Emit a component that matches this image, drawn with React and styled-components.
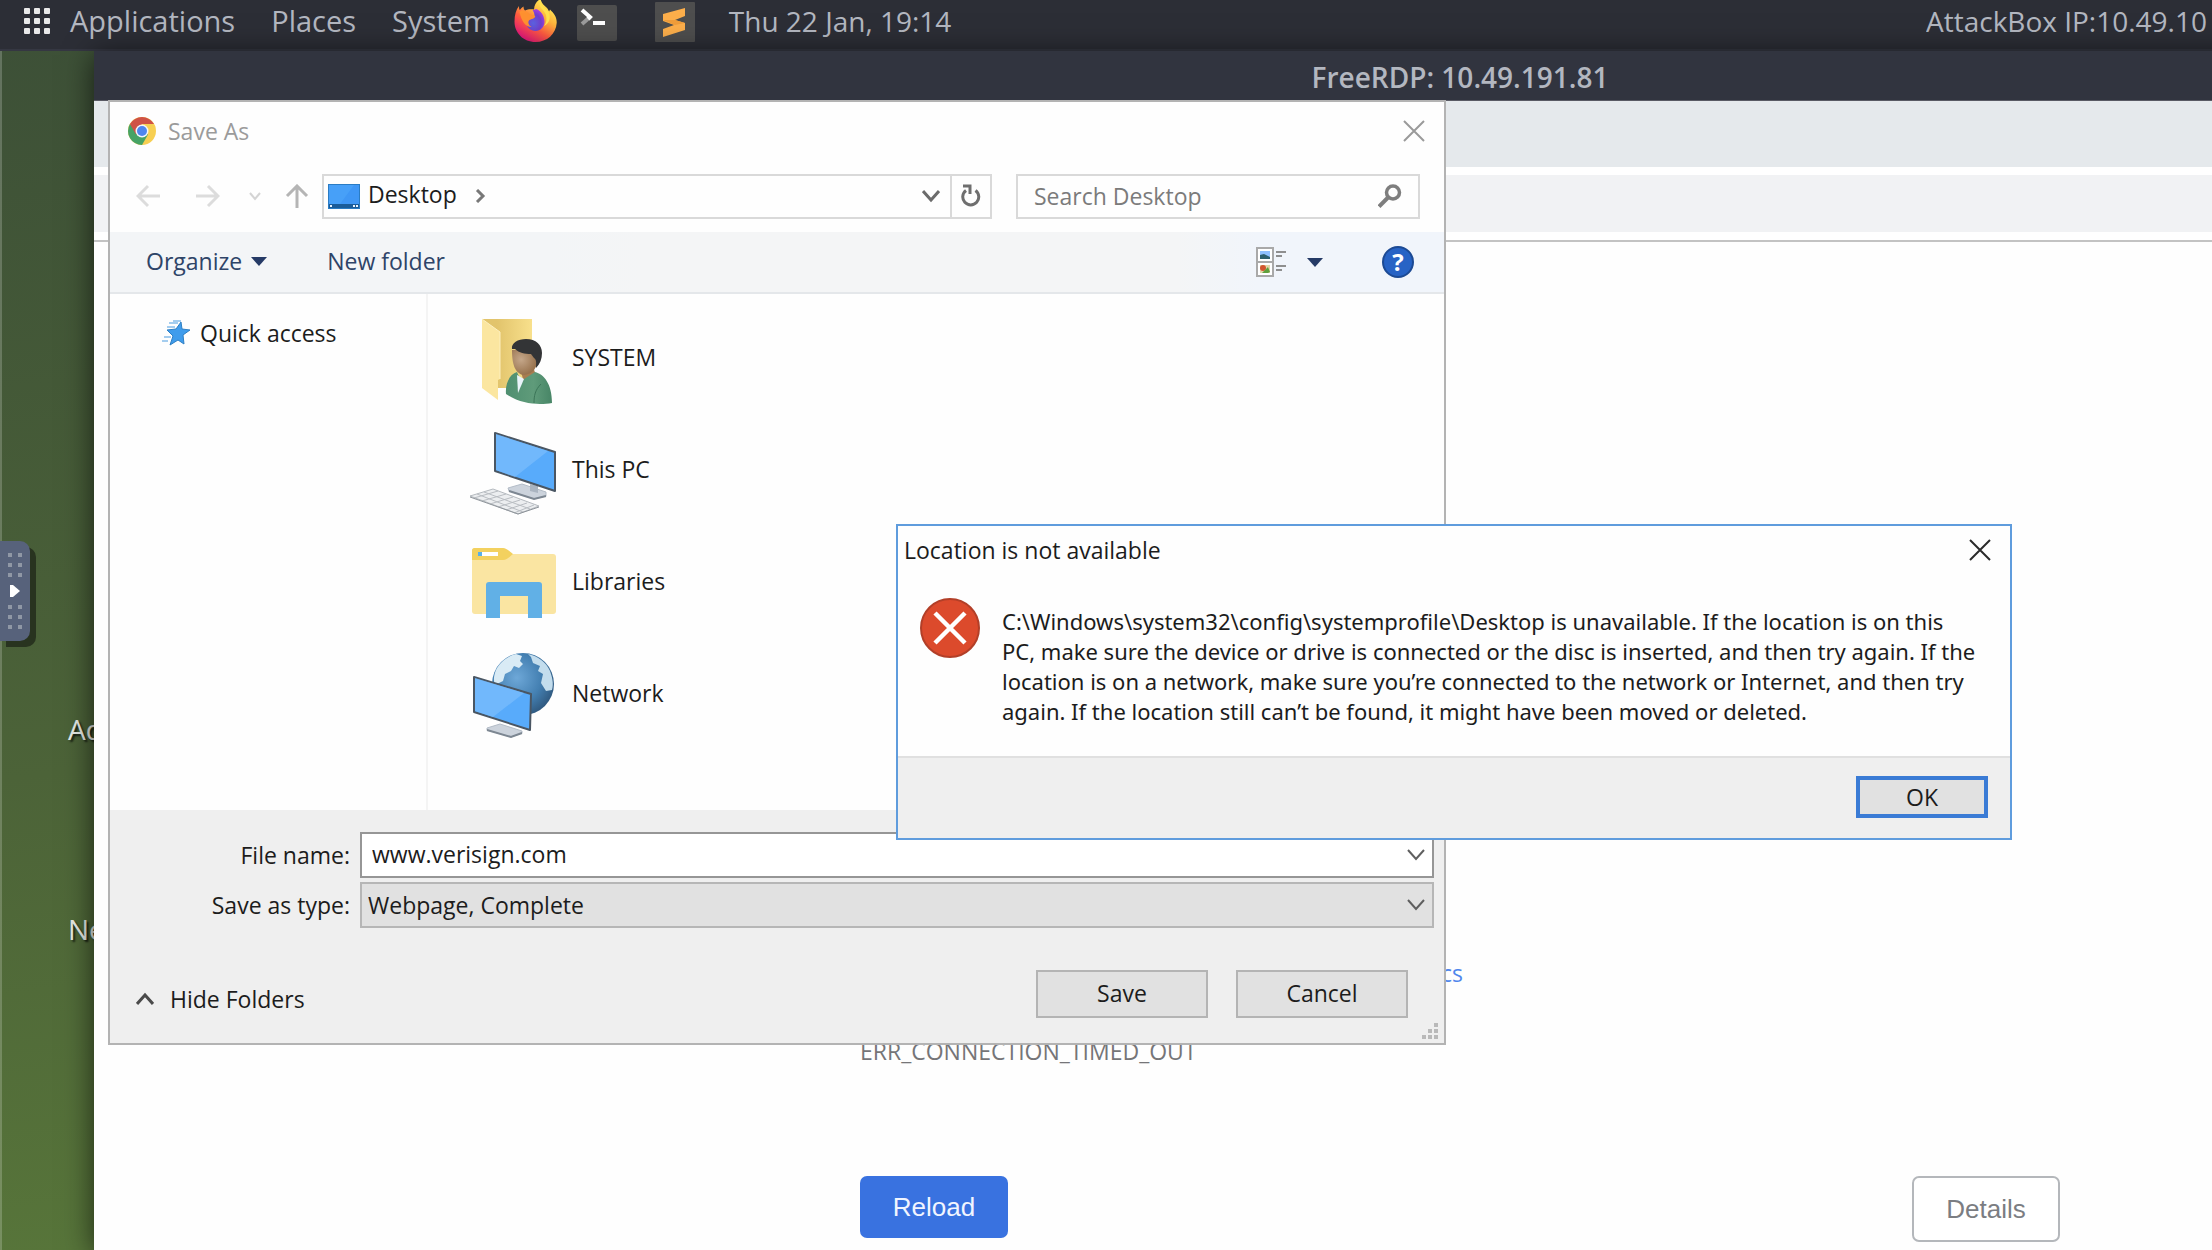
import React from 'react';
import styled, { createGlobalStyle } from 'styled-components';

const uiFont = "'Open Sans', 'Noto Sans', sans-serif";

const GlobalStyle = createGlobalStyle`
  * {
    box-sizing: border-box;
  }

  body {
    margin: 0;
    font-family: ${uiFont};
    font-size: 23px;
    line-height: 30px;
    color: #1c1c1c;
  }

  button,
  input,
  select {
    margin: 0;
    padding: 0;
    border: 0;
    background: none;
    color: inherit;
    font: inherit;
  }

  svg {
    display: block;
    flex: none;
  }
`;

/* Desktop */

const Desktop = styled.div`
  position: relative;
  min-height: 100vh;
  overflow: hidden;
  background: linear-gradient(172deg, #3c4f37 0%, #4c6338 50%, #5e803b 100%);
  box-shadow: inset 2px 0 0 rgba(255, 255, 255, 0.2);
`;

const TopPanel = styled.header`
  display: flex;
  align-items: center;
  height: 51px;
  padding: 0 0 8px 24px;
  background: #2c2e36;
  border-bottom: 2px solid #353742;
  color: #b3b7c0;
  font-size: 28px;
`;

const PanelMenu = styled.nav`
  display: flex;
  gap: 36px;
  margin-left: 20px;
  font-size: 29px;
`;

const Launchers = styled.div`
  display: flex;
  align-items: flex-start;
  margin-left: 24px;
`;

const Launcher = styled.button`
  height: 43px;
  margin-right: ${props => props.$gap || 0}px;
  padding-top: ${props => props.$top || 0}px;
`;

const Clock = styled.time`
  margin-left: 34px;
`;

const HostAddress = styled.span`
  width: 286px;
  margin-left: auto;
  overflow: hidden;
  white-space: nowrap;
`;

const DesktopLabel = styled.span`
  position: absolute;
  top: ${props => props.$top}px;
  left: 68px;
  color: #e8ebe6;
  font-size: 28px;
  text-shadow: 2px 2px 2px rgba(0, 0, 0, 0.7);
`;

const DockHandle = styled.button`
  position: absolute;
  top: 541px;
  left: 0;
  width: 30px;
  height: 100px;
  border-radius: 0 10px 10px 0;
  background: #57627b;
  box-shadow: 6px 6px 0 #28331f;
`;

/* Remote session, runs past the right edge of the desktop */

const RemoteWindow = styled.section`
  position: absolute;
  inset: 51px -614px 0 94px;
  display: flex;
  flex-direction: column;
  background: #fefefe;
  box-shadow: 0 4px 28px rgba(0, 0, 0, 0.65);
`;

const RemoteTitle = styled.h1`
  margin: 0;
  padding: 11px 0 8px;
  background: #31343f;
  border-bottom: 1px solid #595a64;
  color: #b3b7c0;
  font-size: 28px;
  font-weight: 600;
  text-align: center;
`;

const TabStrip = styled.div`
  height: 66px;
  background: #e5e9ec;
`;

const AddressRow = styled.div`
  padding: 8px 0;
  background: #ffffff;
  border-bottom: 2px solid #c3c3c3;
`;

const AddressField = styled.div`
  height: 57px;
  background: #f1f2f4;
`;

const ErrorPage = styled.main`
  width: 100%;
  max-width: 1200px;
  margin: 0 auto;
  padding-top: 716px;
  color: #757578;
`;

const DiagnosticsLink = styled.a`
  display: block;
  width: 603px;
  color: #4f86ec;
  text-align: right;
  text-decoration: none;
`;

const ErrorCode = styled.p`
  margin: 48px 0 110px;
`;

const ErrorActions = styled.div`
  display: flex;
  justify-content: space-between;
`;

const PageButton = styled.button`
  width: 148px;
  height: ${props => (props.$primary ? 62 : 66)}px;
  border: ${props => (props.$primary ? '0' : '2px solid #b4b7bb')};
  border-radius: 7px;
  background: ${props => (props.$primary ? '#3972e0' : '#ffffff')};
  color: ${props => (props.$primary ? '#f1f5ff' : '#7b7d82')};
  font-family: 'Liberation Sans', Arial, sans-serif;
  font-size: 26px;
`;

/* Save As */

const SaveDialog = styled.form`
  position: absolute;
  top: 100px;
  left: 108px;
  width: 1338px;
  background: #fefefe;
  border: 2px solid #b3b3b3;
`;

const DialogTitle = styled.div`
  display: flex;
  align-items: center;
  gap: 12px;
  height: 58px;
  padding: 0 19px 0 18px;
  color: #9b9b9b;
`;

const CloseButton = styled.button`
  margin-left: auto;
`;

const NavRow = styled.div`
  display: flex;
  align-items: center;
  height: 72px;
  padding: 0 24px 0 26px;
`;

const NavButtons = styled.div`
  display: grid;
  grid-template-columns: 60px 53px 36px 37px;
  align-items: center;
  justify-items: start;
`;

const PathBox = styled.div`
  display: flex;
  flex: 1;
  align-items: center;
  height: 45px;
  padding-left: 4px;
  border: 2px solid #d9d9d9;
`;

const PathName = styled.span`
  padding: 0 18px 4px 8px;
`;

const PathToggle = styled.button`
  margin: 0 10px 0 auto;
`;

const RefreshButton = styled.button`
  display: grid;
  place-items: center;
  align-self: stretch;
  width: 40px;
  border-left: 2px solid #d9d9d9;
`;

const SearchBox = styled.label`
  display: flex;
  align-items: center;
  width: 404px;
  height: 45px;
  margin-left: 24px;
  padding: 0 16px;
  border: 2px solid #d9d9d9;
`;

const SearchInput = styled.input`
  flex: 1;
  min-width: 0;
  outline: 0;

  &::placeholder {
    color: #7b7b7b;
    opacity: 1;
  }
`;

const CommandBar = styled.div`
  display: flex;
  align-items: center;
  height: 62px;
  padding: 0 30px 0 36px;
  background: linear-gradient(90deg, #f3f5f7 33%, #f4f5f6 40%, #f4f5f6 80%, #f1f5fb 86%);
  border-bottom: 2px solid #e4e7ea;
  color: #2e4468;
`;

const CommandButton = styled.button`
  display: flex;
  align-items: center;
  gap: 9px;
  margin-right: ${props => props.$after || 0}px;
  padding-bottom: 2px;
`;

const ViewTools = styled.div`
  display: flex;
  align-items: center;
  gap: 59px;
  margin-left: auto;
`;

const ViewButton = styled.button`
  display: flex;
  align-items: center;
  gap: 20px;
`;

const Browser = styled.div`
  display: grid;
  grid-template-columns: 318px 1fr;
  height: 516px;
`;

const Sidebar = styled.div`
  padding: 24px 0 0 52px;
  border-right: 2px solid #f4f4f4;
`;

const SidebarItem = styled.div`
  display: flex;
  align-items: center;
  gap: 10px;
`;

const Places = styled.ul`
  display: flex;
  flex-direction: column;
  gap: 22px;
  margin: 0;
  padding: 22px 0 0 40px;
  list-style: none;
`;

const Place = styled.li`
  display: flex;
  align-items: center;
  gap: 14px;

  span {
    padding-bottom: 8px;
  }
`;

const SavePanel = styled.div`
  position: relative;
  padding: 22px 10px 25px;
  background: #efefef;
`;

const Fields = styled.div`
  display: grid;
  grid-template-columns: 230px 1fr;
  column-gap: 10px;
  row-gap: 4px;
  align-items: center;
`;

const FieldLabel = styled.label`
  text-align: right;
`;

const FieldBox = styled.div`
  display: flex;
  align-items: center;
  height: 46px;
  padding-right: 7px;
  background: ${props => (props.$filled ? '#e1e1e1' : '#ffffff')};
  border: 2px solid ${props => (props.$filled ? '#b6b6b6' : '#969696')};

  input,
  select {
    flex: 1;
    min-width: 0;
    height: 38px;
    padding-left: ${props => (props.$filled ? 6 : 10)}px;
    padding-bottom: ${props => (props.$filled ? 0 : 2)}px;
    outline: 0;
    appearance: none;
  }
`;

const ActionRow = styled.div`
  display: flex;
  align-items: center;
  margin-top: 42px;
  padding: 0 26px 0 16px;
`;

const HideFolders = styled.button`
  display: flex;
  align-items: center;
  gap: 16px;
  margin-right: auto;
  padding-top: 10px;
`;

const DialogButton = styled.button`
  width: 172px;
  height: 48px;
  margin-left: 28px;
  padding-bottom: 2px;
  background: #e1e1e1;
  border: 2px solid #b4b4b4;
`;

const ResizeGrip = styled.svg`
  position: absolute;
  right: 6px;
  bottom: 4px;
`;

/* Location alert */

const Alert = styled.div`
  position: absolute;
  top: 524px;
  left: 896px;
  width: 1116px;
  background: #fefefe;
  border: 2px solid #5f9cdd;
`;

const AlertTitle = styled.div`
  display: flex;
  align-items: center;
  height: 48px;
  padding: 0 19px 0 6px;
`;

const AlertBody = styled.div`
  display: flex;
  gap: 22px;
  padding: 24px 16px 30px 22px;
  font-family: 'Noto Sans', 'Open Sans', sans-serif;
  font-size: 22px;

  p {
    margin: 8px 0 0;
    white-space: nowrap;
  }
`;

const AlertFooter = styled.div`
  display: flex;
  justify-content: flex-end;
  padding: 18px 22px 20px;
  background: #efefef;
  border-top: 2px solid #e0e0e0;
`;

const OkButton = styled.button`
  width: 132px;
  height: 42px;
  background: #e1e1e1;
  border: 4px solid #3a7bd5;
`;

/* Icons */

const AppsGrid = () => (
  <svg width="26" height="26" fill="#e9e9ea">
    {[0, 10, 20].map(y =>
      [0, 10, 20].map(x => <rect key={`${x}-${y}`} x={x} y={y} width="6" height="6" rx="1" />)
    )}
  </svg>
);

const FirefoxIcon = () => (
  <svg width="43" height="43" viewBox="0 0 43 43">
    <defs>
      <linearGradient id="fxBody" x1="0.85" y1="0.1" x2="0.25" y2="0.95">
        <stop offset="0" stopColor="#fff25a" />
        <stop offset="0.35" stopColor="#ffb13b" />
        <stop offset="0.65" stopColor="#ff5a40" />
        <stop offset="1" stopColor="#e2177b" />
      </linearGradient>
      <radialGradient id="fxGlobe" cx="0.4" cy="0.65" r="0.7">
        <stop offset="0" stopColor="#5b62e0" />
        <stop offset="0.6" stopColor="#7040cc" />
        <stop offset="1" stopColor="#b23fe0" />
      </radialGradient>
    </defs>
    <path
      d="M5 7c0 2 .2 3 .8 4C7 9.400 8 8.500 9.500 7.500c0 2 .5 3 1.500 4 3-1.500 6-1.500 9-1 .3-5 2.500-8.500 6.500-10.500 1 4 3 6 6 8.500 1 1 2 2.500 2.600 4l.9-2C40 14.500 43 18 42.700 24 42 35 33 43 21.500 43 9.500 43 .5 34 .5 22.500.5 16 2 10.500 5 7z"
      fill="url(#fxBody)"
    />
    <path d="M22 10c4 1 8.500 6 8.500 12.500C30.500 28 26.500 32 21.500 32S12 28 12 22.500c0-2 .5-3.500 1.500-5l7-.5c0-3-1-4.500-2-5.500z" fill="url(#fxGlobe)" />
    <path d="M5.500 13c2-2 4-1.800 6-1 2.500 1 3 3.500 8.500 4.500 1 .2 1.500.5 1 1.500-1 2-5 2.200-6 3.500-1.500 2 0 5 2.500 6.500-6 0-10-6-12-15z" fill="#ff9130" />
    <path d="M26 2c-2 7 4 8 6 14 1 4 .5 8-2 11 5-2 7-8 5-13-2-4-7-6-9-12z" fill="#ffe24d" />
  </svg>
);

const TerminalIcon = () => (
  <svg width="40" height="36" viewBox="0 0 40 36">
    <rect width="40" height="36" rx="2" fill="#4e4e4e" />
    <path d="M5 19l8-7" fill="none" stroke="#9b9b9b" strokeWidth="4" />
    <path d="M5 5l8 7-2 2" fill="none" stroke="#ffffff" strokeWidth="4" />
    <rect x="16" y="16" width="12" height="4" fill="#ffffff" />
  </svg>
);

const SublimeIcon = () => (
  <svg width="40" height="40" viewBox="0 0 40 40">
    <rect width="40" height="40" rx="1" fill="#4e4e4e" />
    <path d="M30 6v8l-10 4 10 3v7L8 35v-8l11-4-11-4v-7z" fill="#fdaf4b" />
    <path d="M8 18l12 5 10-2-10-3z" fill="#f09d3a" />
  </svg>
);

const ChromeIcon = () => (
  <svg width="28" height="28" viewBox="0 0 28 28">
    <circle cx="14" cy="14" r="14" fill="#f7cf52" />
    <path d="M1.900 7A14 14 0 0 1 26.100 7H14z" fill="#cf5246" />
    <path d="M1.900 7A14 14 0 0 0 14 28l6-10.500-6-3.500z" fill="#46a365" />
    <path d="M1.900 7L14 7l-6 10.500z" fill="#cf5246" />
    <circle cx="14" cy="14" r="6.500" fill="#f3f6fb" />
    <circle cx="14" cy="14" r="5" fill="#4e86ee" />
  </svg>
);

const Cross = ({ size = 22, color }) => (
  <svg width={size} height={size} viewBox="0 0 22 22" stroke={color} strokeWidth="2">
    <path d="M1 1l20 20M21 1L1 21" />
  </svg>
);

const Arrow = ({ d, color = '#dcdcdc', width = 24 }) => (
  <svg width={width} height="24" viewBox={`0 0 ${width} 24`} fill="none" stroke={color} strokeWidth="3">
    <path d={d} />
  </svg>
);

const Chevron = ({ d = 'M1 2l8 9 8-9', color = '#6b6b6b', width = 18, height = 14, stroke = 3 }) => (
  <svg width={width} height={height} viewBox={`0 0 ${width} ${height}`} fill="none" stroke={color} strokeWidth={stroke}>
    <path d={d} />
  </svg>
);

const Triangle = () => (
  <svg width="16" height="9" fill="#253a66">
    <path d="M0 0h16l-8 9z" />
  </svg>
);

const DesktopIcon = () => (
  <svg width="32" height="25" viewBox="0 0 32 25">
    <rect width="32" height="25" fill="#2a7cc4" />
    <rect x="1" y="1" width="30" height="19" fill="#47a0f8" />
    <path d="M12 20L26 1h5v19z" fill="#3f97f5" />
    <rect x="1" y="20" width="30" height="4" fill="#1a5c99" />
    <path d="M2 22h2M25 22h2M28 22h2" stroke="#e9f4ff" strokeWidth="2" />
  </svg>
);

const RefreshIcon = () => (
  <svg width="20" height="24" viewBox="0 0 20 24" fill="none" stroke="#6e6e6e" strokeWidth="3">
    <path d="M14.500 6.500A8 8 0 1 1 5 6.500" />
    <path d="M2 2h7v8" />
  </svg>
);

const SearchIcon = () => (
  <svg width="24" height="24" viewBox="0 0 24 24" fill="none" stroke="#7e7e7e">
    <circle cx="15" cy="8.500" r="6.500" strokeWidth="3.500" />
    <path d="M10.500 13L1 22.500" strokeWidth="4" />
  </svg>
);

const ViewIcon = () => (
  <svg width="31" height="31" viewBox="0 0 31 31">
    <path d="M1 1h16v28H1zM1 15h16" fill="#ffffff" stroke="#a9a9a9" strokeWidth="2" />
    <rect x="4" y="4" width="10" height="8" fill="#8fc0ff" />
    <path d="M4 8l4-1 6 3v2H4z" fill="#2d5f6e" />
    <rect x="4" y="18" width="10" height="8" fill="#e4d6a8" />
    <circle cx="7" cy="21" r="3" fill="#d2552f" />
    <path d="M6 26l6-6 2 5-2 1z" fill="#5fa03d" />
    <path d="M20 5h10M20 9h6M20 19h10M20 23h6" stroke="#8f8f8f" strokeWidth="2" />
  </svg>
);

const HelpBadge = styled.button`
  width: 32px;
  height: 32px;
  background: #2763c5;
  border: 2px solid #1c4a94;
  border-radius: 50%;
  color: #ffffff;
  font-size: 24px;
  font-weight: 700;
  line-height: 28px;
`;

const StarIcon = () => (
  <svg width="28" height="26" viewBox="0 0 28 26">
    <path d="M7 3h9M5 7h8M2 17h7M0 21h6M11 1h8" stroke="#86bdea" strokeWidth="1.500" />
    <path d="M19 2l1 7 8 1-7 5 1 9-6-4-8 5 3-9-6-6 9-1z" fill="#3f9cec" stroke="#2d7fc4" />
  </svg>
);

const Screen = ({ points, shine }) => (
  <g strokeLinejoin="round">
    <polygon points={points} fill="#58abfb" stroke="#4a5663" strokeWidth="2" />
    <polygon points={shine} fill="#7cbdfc" opacity="0.7" />
  </g>
);

const UserFolderIcon = () => (
  <svg width="90" height="90" viewBox="0 0 90 90">
    <defs>
      <linearGradient id="folderBack">
        <stop offset="0.300" stopColor="#e2c46c" />
        <stop offset="1" stopColor="#f8e08c" />
      </linearGradient>
      <radialGradient id="face" cx="0.35" cy="0.4" r="0.7">
        <stop offset="0" stopColor="#c5a78a" />
        <stop offset="1" stopColor="#916a44" />
      </radialGradient>
      <linearGradient id="coat">
        <stop offset="0" stopColor="#4f8f70" />
        <stop offset="0.6" stopColor="#5f9b7a" />
        <stop offset="1" stopColor="#478566" />
      </linearGradient>
    </defs>
    <path d="M14 3h50v69H30z" fill="url(#folderBack)" />
    <path d="M14 3l18 13v47l-2 1v20L14 72z" fill="#fbe6a0" />
    <path d="M14 3l18 13v47" fill="none" stroke="#fdf0c0" />
    <path d="M52 52l13-1 3 8-10 15z" fill="#a87c50" />
    <path d="M38 78c-1-11 4-20 11-22l4 9 14-9c9 2 17 12 17 31-12 2-30 2-46-9z" fill="url(#coat)" />
    <path d="M49 59l7 4-6 14z" fill="#eaf3fa" />
    <path d="M66 87c0-7 1-13 7-19" fill="none" stroke="#3b7558" />
    <path d="M44 34c0 12 2 24 12 25 9-1 14-8 14-18l-6-8z" fill="url(#face)" />
    <path d="M44 33c-1-6 6-10 14-10 10 0 16 6 16 14 0 6-2 11-6 15 0-5 1-8-2-10l-3-4c-6 0-12-1-16-5z" fill="#333436" />
  </svg>
);

const ComputerIcon = () => (
  <svg width="90" height="90" viewBox="0 0 90 90">
    <path d="M40 60l14-4 24 8v4l-12 3-25-8z" fill="#ccd3dc" stroke="#b3bcc7" />
    <path d="M41 63l25 8 12-3" fill="none" stroke="#7d8792" strokeWidth="2" />
    <path d="M62 56l8 2v7l-8-2z" fill="#aab4c0" />
    <Screen points="27,5 87,24 87,63 27,43" shine="28,6 80,23 47,49 28,42" />
    <path d="M2 68l23-7 46 17-21 8z" fill="#eceef0" stroke="#b5babf" />
    <path
      d="M9 66l46 18M16 64l46 17M6 70l24-7M14 73l24-7M22 76l23-7M30 79l22-7M38 82l21-7M46 85l20-8"
      stroke="#b9bdc2"
      strokeWidth="1"
    />
    <path d="M2 69l48 17 21-7" fill="none" stroke="#8f959b" />
  </svg>
);

const LibrariesIcon = () => (
  <svg width="90" height="90" viewBox="0 0 90 90">
    <rect x="4" y="14" width="84" height="60" rx="3" fill="#fae5a2" />
    <path d="M6 8h29c3 0 5 2 10 6-5 4-6 6-10 6H4V10c0-1 1-2 2-2z" fill="#f3d15f" />
    <rect x="10" y="12" width="20" height="4" fill="#ffffff" />
    <rect x="10" y="12" width="4" height="4" fill="#58b0e8" />
    <path d="M18 78V45q0-3 3-3h50q3 0 3 3v33H60V56H32v22z" fill="#61b0e6" />
  </svg>
);

const NetworkIcon = () => (
  <svg width="90" height="90" viewBox="0 0 90 90">
    <defs>
      <radialGradient id="globe" cx="0.4" cy="0.4" r="0.65">
        <stop offset="0" stopColor="#6ea8d8" />
        <stop offset="0.6" stopColor="#4480b2" />
        <stop offset="1" stopColor="#2f587e" />
      </radialGradient>
    </defs>
    <circle cx="55" cy="32" r="31" fill="url(#globe)" />
    <path d="M28 18c4-8 12-14 20-16l6 2-2 5 3 3-4 4-5-2-3 5-6 3-2 7-8 4c-2-5-1-10 1-15z" fill="#d9ebf5" />
    <path d="M60 2c10 2 18 8 22 17 2 6 4 12 2 19l-6 1-5-8 2-9-5-3 2-5-7-3-2-6z" fill="#c3dded" />
    <path d="M19 76l13-4 22 7v2l-11 4-24-7z" fill="#ccd3dc" stroke="#b3bcc7" />
    <path d="M19 78l24 7 11-4" fill="none" stroke="#7d8792" strokeWidth="2" />
    <Screen points="6,25 63,42 62,78 6,60" shine="7,26 56,41 25,65 7,59" />
  </svg>
);

const ErrorIcon = () => (
  <svg width="60" height="60" viewBox="0 0 60 60">
    <circle cx="30" cy="30" r="29" fill="#dc4a2c" stroke="#b23f28" strokeWidth="2" />
    <path d="M15 15l30 30M45 15L15 45" stroke="#ffffff" strokeWidth="4.500" />
  </svg>
);

const HandleIcon = () => (
  <svg width="30" height="100" viewBox="0 0 30 100">
    {[12, 22, 32, 64, 74, 84].map(y => (
      <path key={y} d={`M8 ${y + 2}h4M18 ${y + 2}h4`} stroke="#8f97a5" strokeWidth="4" />
    ))}
    <path d="M10 44h3l7 6-7 6h-3z" fill="#ffffff" />
  </svg>
);

const places = [
  { name: 'SYSTEM', Icon: UserFolderIcon },
  { name: 'This PC', Icon: ComputerIcon },
  { name: 'Libraries', Icon: LibrariesIcon },
  { name: 'Network', Icon: NetworkIcon },
];

class RemoteSession extends React.Component {
  render() {
    return (
      <RemoteWindow>
        <RemoteTitle>FreeRDP: 10.49.191.81</RemoteTitle>
        <TabStrip />
        <AddressRow>
          <AddressField />
        </AddressRow>
        <ErrorPage>
          <DiagnosticsLink href="#diagnostics">Diagnostics</DiagnosticsLink>
          <ErrorCode>ERR_CONNECTION_TIMED_OUT</ErrorCode>
          <ErrorActions>
            <PageButton $primary>Reload</PageButton>
            <PageButton>Details</PageButton>
          </ErrorActions>
        </ErrorPage>
      </RemoteWindow>
    );
  }
}

class SaveAs extends React.Component {
  render() {
    return (
      <SaveDialog onSubmit={e => e.preventDefault()}>
        <DialogTitle>
          <ChromeIcon />
          <span>Save As</span>
          <CloseButton type="button" aria-label="Close">
            <Cross color="#9a9a9a" />
          </CloseButton>
        </DialogTitle>

        <NavRow>
          <NavButtons>
            <button type="button" aria-label="Back">
              <Arrow d="M24 12H2M12 2L2 12l10 10" />
            </button>
            <button type="button" aria-label="Forward">
              <Arrow d="M0 12h22M12 2l10 10-10 10" />
            </button>
            <button type="button" aria-label="Recent locations">
              <Chevron d="M1 1l5 6 5-6" color="#d4d4d4" width={12} height={9} stroke={2} />
            </button>
            <button type="button" aria-label="Up">
              <Arrow d="M12 24V2M2 12L12 2l10 10" color="#b5b5b5" />
            </button>
          </NavButtons>
          <PathBox>
            <DesktopIcon />
            <PathName>Desktop</PathName>
            <Chevron d="M2 1l6 6-6 6" width={11} color="#787878" />
            <PathToggle type="button" aria-label="Previous locations">
              <Chevron />
            </PathToggle>
            <RefreshButton type="button" aria-label="Refresh">
              <RefreshIcon />
            </RefreshButton>
          </PathBox>
          <SearchBox>
            <SearchInput type="text" placeholder="Search Desktop" aria-label="Search Desktop" />
            <SearchIcon />
          </SearchBox>
        </NavRow>

        <CommandBar>
          <CommandButton type="button" $after={60}>
            Organize
            <Triangle />
          </CommandButton>
          <CommandButton type="button">New folder</CommandButton>
          <ViewTools>
            <ViewButton type="button" aria-label="Change view">
              <ViewIcon />
              <Triangle />
            </ViewButton>
            <HelpBadge type="button">?</HelpBadge>
          </ViewTools>
        </CommandBar>

        <Browser>
          <Sidebar>
            <SidebarItem>
              <StarIcon />
              Quick access
            </SidebarItem>
          </Sidebar>
          <Places>
            {places.map(({ name, Icon }) => (
              <Place key={name}>
                <Icon />
                <span>{name}</span>
              </Place>
            ))}
          </Places>
        </Browser>

        <SavePanel>
          <Fields>
            <FieldLabel htmlFor="file-name">File name:</FieldLabel>
            <FieldBox>
              <input id="file-name" type="text" defaultValue="www.verisign.com" />
              <Chevron color="#5f5f5f" stroke={2} />
            </FieldBox>
            <FieldLabel htmlFor="file-type">Save as type:</FieldLabel>
            <FieldBox $filled>
              <select id="file-type">
                <option>Webpage, Complete</option>
              </select>
              <Chevron color="#5f5f5f" stroke={2} />
            </FieldBox>
          </Fields>
          <ActionRow>
            <HideFolders type="button">
              <Chevron d="M1 12l8-9 8 9" color="#4a4a4a" />
              Hide Folders
            </HideFolders>
            <DialogButton type="submit">Save</DialogButton>
            <DialogButton type="button">Cancel</DialogButton>
          </ActionRow>
          <ResizeGrip width="16" height="16" fill="#b9b9b9">
            <path d="M12 0h4v4h-4zM6 6h4v4H6zM12 6h4v4h-4zM0 12h4v4H0zM6 12h4v4H6zM12 12h4v4h-4z" />
          </ResizeGrip>
        </SavePanel>
      </SaveDialog>
    );
  }
}

class LocationAlert extends React.Component {
  render() {
    return (
      <Alert role="alertdialog" aria-labelledby="alert-title">
        <AlertTitle>
          <span id="alert-title">Location is not available</span>
          <CloseButton type="button" aria-label="Close">
            <Cross color="#2b2b2b" />
          </CloseButton>
        </AlertTitle>
        <AlertBody>
          <ErrorIcon />
          <p>
            C:\Windows\system32\config\systemprofile\Desktop is unavailable. If the location is on this
            <br />
            PC, make sure the device or drive is connected or the disc is inserted, and then try again. If the
            <br />
            location is on a network, make sure you’re connected to the network or Internet, and then try
            <br />
            again. If the location still can’t be found, it might have been moved or deleted.
          </p>
        </AlertBody>
        <AlertFooter>
          <OkButton type="button">OK</OkButton>
        </AlertFooter>
      </Alert>
    );
  }
}

const App = () => (
  <Desktop>
    <GlobalStyle />
    <TopPanel>
      <AppsGrid />
      <PanelMenu>
        <span>Applications</span>
        <span>Places</span>
        <span>System</span>
      </PanelMenu>
      <Launchers>
        <Launcher aria-label="Firefox" $gap={20}>
          <FirefoxIcon />
        </Launcher>
        <Launcher aria-label="Terminal" $gap={38} $top={4}>
          <TerminalIcon />
        </Launcher>
        <Launcher aria-label="Sublime Text" $top={2}>
          <SublimeIcon />
        </Launcher>
      </Launchers>
      <Clock>Thu 22 Jan, 19:14</Clock>
      <HostAddress>AttackBox IP:10.49.10</HostAddress>
    </TopPanel>
    <DesktopLabel $top={714}>Ad</DesktopLabel>
    <DesktopLabel $top={914}>Ne</DesktopLabel>
    <RemoteSession />
    <DockHandle aria-label="Open control bar">
      <HandleIcon />
    </DockHandle>
    <SaveAs />
    <LocationAlert />
  </Desktop>
);

export default App;
